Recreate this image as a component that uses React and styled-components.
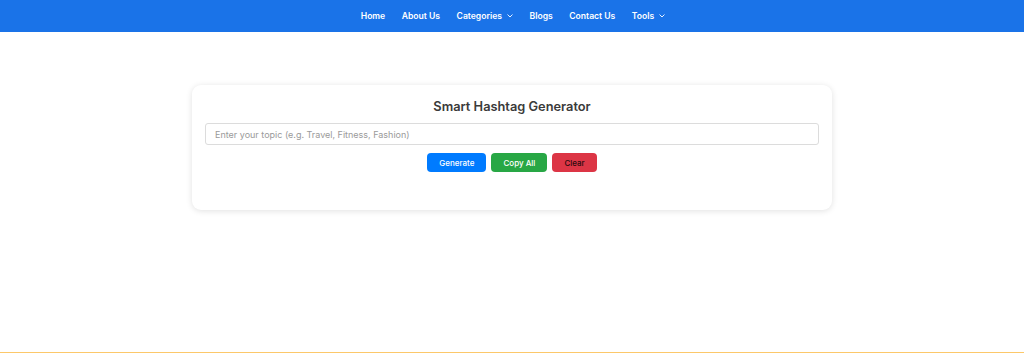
import React from "react";
import styled, { createGlobalStyle } from "styled-components";

const Global = createGlobalStyle`
  * { box-sizing: border-box; }
  html, body { margin: 0; padding: 0; background: #fff; }
  body { font-family: Inter, "Noto Sans", sans-serif; }
`;

const Page = styled.div`
  min-height: 100vh;
  display: flex;
  flex-direction: column;
`;

const NavBar = styled.nav`
  height: 32px;
  background: #1a73e8;
  display: flex;
  justify-content: center;
  align-items: center;
  gap: 16.5px;
  padding-left: 2px;
`;

const NavItem = styled.a`
  color: #fff;
  font-size: 8.6px;
  font-weight: 600;
  text-decoration: none;
  display: flex;
  align-items: center;
  gap: 5px;
`;

const Chevron = () => (
  <svg width="6" height="4" viewBox="0 0 6 4" fill="none">
    <path d="M0.8 0.8 L3 3 L5.2 0.8" stroke="#fff" strokeWidth="0.9" strokeLinecap="round" strokeLinejoin="round" />
  </svg>
);

const Main = styled.main`
  flex: 1;
  display: flex;
  justify-content: center;
  padding-top: 53px;
`;

const Card = styled.section`
  width: 640px;
  height: 125px;
  background: #fff;
  border-radius: 9px;
  box-shadow: 0 1px 6px rgba(0, 0, 0, 0.12);
  padding: 13px 13px;
  display: flex;
  flex-direction: column;
  align-items: stretch;
`;

const Title = styled.h2`
  margin: 0;
  font-size: 12.8px;
  line-height: 18px;
  font-weight: 600;
  color: #3a3a3a;
  text-align: center;
`;

const Input = styled.input`
  margin-top: 7px;
  height: 22px;
  border: 1px solid #dcdcdc;
  border-radius: 3px;
  padding: 0 9px;
  font-family: Inter, "Noto Sans", sans-serif;
  font-size: 9px;
  color: #333;
  outline: none;
  &::placeholder { color: #9a9a9a; }
`;

const ButtonRow = styled.div`
  margin-top: 8px;
  display: flex;
  justify-content: center;
  gap: 5px;
`;

const Button = styled.button`
  height: 19px;
  border: none;
  border-radius: 4px;
  padding: 0 ${(p) => p.$px || 12}px;
  background: ${(p) => p.$bg};
  color: ${(p) => p.$fg || "#fff"};
  font-family: Inter, "Noto Sans", sans-serif;
  font-size: 8px;
  font-weight: 500;
  cursor: pointer;
`;

const Footer = styled.footer`
  border-top: 1px solid #fcc86a;
  height: 0;
`;

export default function App() {
  return (
    <>
      <Global />
      <Page>
        <NavBar>
          <NavItem>Home</NavItem>
          <NavItem>About Us</NavItem>
          <NavItem>Categories <Chevron /></NavItem>
          <NavItem>Blogs</NavItem>
          <NavItem>Contact Us</NavItem>
          <NavItem>Tools <Chevron /></NavItem>
        </NavBar>
        <Main>
          <Card>
            <Title>Smart Hashtag Generator</Title>
            <Input placeholder="Enter your topic (e.g. Travel, Fitness, Fashion)" />
            <ButtonRow>
              <Button $bg="#007bff" $px={12}>Generate</Button>
              <Button $bg="#28a745" $px={12}>Copy All</Button>
              <Button $bg="#dc3545" $fg="#2a0a0d" $px={12}>Clear</Button>
            </ButtonRow>
          </Card>
        </Main>
        <Footer />
      </Page>
    </>
  );
}
